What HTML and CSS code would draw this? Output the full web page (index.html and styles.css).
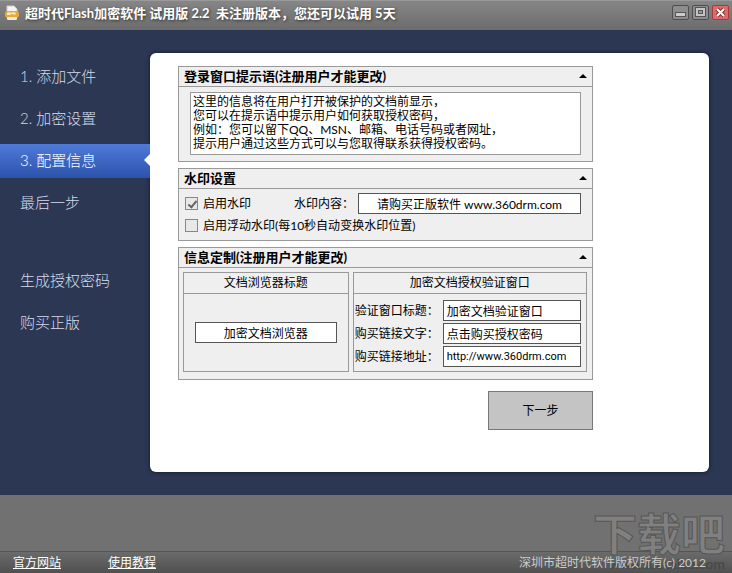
FILE: index.html
```html
<!DOCTYPE html>
<html lang="zh-CN">
<head>
  <meta charset="UTF-8">
  <title>超时代Flash加密软件</title>
  <link rel="stylesheet" href="styles.css">
</head>
<body>

  <header class="titlebar">
    <svg class="app-icon" width="16" height="16" viewBox="0 0 16 16" aria-hidden="true">
      <path d="M3 1h7l3 3v5H3z" fill="#f4f4f0" stroke="#cfcfcf" stroke-width="1"/>
      <rect x="1" y="6" width="14" height="7" rx="3" fill="#e9a83a"/>
      <path d="M3 8l2-1 2 1 2-1 3 1-1 2-3-1-2 1-3 0z" fill="#fbe7b8"/>
      <rect x="3" y="12" width="10" height="3" rx="1" fill="#eeeae0"/>
    </svg>
    <h1>超时代Flash加密软件 试用版 2.2 &nbsp;未注册版本，您还可以试用 5天</h1>
    <div class="window-buttons">
      <button type="button" aria-label="最小化">
        <svg width="17" height="15" viewBox="0 0 17 15"><path d="M3 7h11v5H3z" fill="#555"/><path d="M4 8h9v3H4z" fill="#ccc"/></svg>
      </button>
      <button type="button" aria-label="最大化">
        <svg width="17" height="15" viewBox="0 0 17 15"><path d="M3 2h11v10H3z" fill="#555"/><path d="M4 3h9v8H4z" fill="#c4c4c4"/><path d="M6 5h5v4H6z" fill="#555"/><path d="M7 6h3v2H7z" fill="#999"/></svg>
      </button>
      <button type="button" class="close" aria-label="关闭">
        <svg width="17" height="15" viewBox="0 0 17 15"><path d="M5 4l7 7M12 4l-7 7" stroke="#7c3434" stroke-width="4"/><path d="M5 4l7 7M12 4l-7 7" stroke="#fff" stroke-width="2"/></svg>
      </button>
    </div>
  </header>

  <main>
    <nav>
      <a href="#">1. 添加文件</a>
      <a href="#">2. 加密设置</a>
      <a href="#" class="active">3. 配置信息</a>
      <a href="#">最后一步</a>
      <a href="#" class="separate">生成授权密码</a>
      <a href="#">购买正版</a>
    </nav>

    <form class="panel">
      <section class="group">
        <h2><label for="tips">登录窗口提示语(注册用户才能更改)</label></h2>
        <div class="tips">
          <textarea id="tips" rows="4">这里的信息将在用户打开被保护的文档前显示，
您可以在提示语中提示用户如何获取授权密码，
例如：您可以留下QQ、MSN、邮箱、电话号码或者网址，
提示用户通过这些方式可以与您取得联系获得授权密码。</textarea>
        </div>
      </section>

      <section class="group">
        <h2>水印设置</h2>
        <div class="watermark">
          <div class="row">
            <label class="check"><input type="checkbox" checked>启用水印</label>
            <label class="content-label" for="content">水印内容：</label>
            <input type="text" class="center" id="content" value="请购买正版软件 www.360drm.com">
          </div>
          <div class="row">
            <label class="check"><input type="checkbox">启用浮动水印(每10秒自动变换水印位置)</label>
          </div>
        </div>
      </section>

      <section class="group">
        <h2>信息定制(注册用户才能更改)</h2>
        <div class="custom">
          <div class="box browser">
            <h3><label for="browser">文档浏览器标题</label></h3>
            <div class="browser-field">
              <input type="text" class="center" id="browser" value="加密文档浏览器">
            </div>
          </div>
          <div class="box auth">
            <h3>加密文档授权验证窗口</h3>
            <div class="fields">
              <label for="win">验证窗口标题：</label>
              <input type="text" id="win" value="加密文档验证窗口">
              <label for="link">购买链接文字：</label>
              <input type="text" id="link" value="点击购买授权密码">
              <label for="url">购买链接地址：</label>
              <input type="text" id="url" class="url" value="http://www.360drm.com">
            </div>
          </div>
        </div>
      </section>

      <button type="button" class="next">下一步</button>
    </form>
  </main>

  <footer>
    <div class="site-mark" aria-hidden="true">下载吧<small>www.xiazaiba.com</small></div>
    <div class="bottom">
      <a href="#">官方网站</a>
      <a href="#">使用教程</a>
      <span>深圳市超时代软件版权所有(c) 2012</span>
    </div>
  </footer>

</body>
</html>
```
FILE: styles.css
```css
* {
  box-sizing: border-box;
}
body {
  margin: 0;
  min-height: 100vh;
  display: flex;
  flex-direction: column;
  background: #717171;
  font-family: Lato, 'Noto Sans CJK SC', sans-serif;
  font-size: 12px;
  line-height: 14px;
  color: #000;
}
h1, h2, h3 {
  margin: 0;
  font-size: 13px;
}
button, input, textarea {
  font: inherit;
  color: inherit;
  margin: 0;
}

/* title bar */
.titlebar {
  display: flex;
  align-items: flex-start;
  height: 30px;
  padding: 4px 3px 0 4px;
  background: linear-gradient(#868686, #6c6c6c);
  border-top: 1px solid #999;
}
.titlebar h1 {
  margin-left: 5px;
  line-height: 16px;
  color: #fff;
  text-shadow: 1px 1px 3px #333;
  white-space: pre;
}
.window-buttons {
  display: flex;
  gap: 3px;
  margin-left: auto;
}
.window-buttons button {
  width: 17px;
  height: 15px;
  padding: 0;
  border: 1px solid #4e4e4e;
  border-radius: 2px;
  background: #8d8d8d;
  display: flex;
  align-items: center;
  justify-content: center;
}
.window-buttons svg {
  flex: none;
}
.window-buttons .close {
  background: #e06a6a;
  border-color: #a23c3c;
}

/* blue area */
main {
  display: flex;
  align-items: flex-start;
  padding: 23px 23px 23px 0;
  background: #2c3753;
}
nav {
  flex: none;
  width: 150px;
  padding-top: 7px;
  display: flex;
  flex-direction: column;
  gap: 8px;
}
nav a {
  position: relative;
  height: 34px;
  padding-left: 20px;
  font-size: 15px;
  line-height: 32px;
  font-weight: 300;
  color: #d4dbea;
  text-decoration: none;
}
nav .separate {
  margin-top: 36px;
}
nav .active {
  background: linear-gradient(#4f7ad8, #2c53ac);
  color: #fff;
}
nav .active::after {
  content: "";
  position: absolute;
  right: 0;
  top: 10px;
  border: 6px solid transparent;
  border-left: 0;
  border-right-color: #fff;
}
.panel {
  flex: 1;
  padding: 13px 116px 42px 28px;
  border-radius: 6px;
  background: #fff;
  box-shadow: 0 0 4px #10182c;
  display: flex;
  flex-direction: column;
}

/* groups */
.group {
  margin-bottom: 6px;
  border: 1px solid #999;
  background: #efefef;
}
.group h2 {
  display: flex;
  align-items: center;
  justify-content: space-between;
  height: 20px;
  padding: 0 5px 2px;
  border-bottom: 1px solid #999;
}
.group h2::after {
  content: "";
  border: 4px solid transparent;
  border-top: 0;
  border-bottom-color: #000;
}
.tips {
  padding: 5px 11px 6px;
}
textarea {
  display: block;
  width: 100%;
  height: 63px;
  padding: 2px;
  border: 1px solid #999;
  background: #fff;
  resize: none;
  overflow: hidden;
}
input[type="text"] {
  width: 100%;
  min-width: 0;
  height: 21px;
  padding: 0 3px;
  border: 1px solid #555;
  background: #fff;
}
.center {
  text-align: center;
}
.watermark {
  padding: 4px 11px 3px 6px;
}
.row {
  display: flex;
  align-items: center;
  height: 23px;
}
.row:first-child {
  height: 21px;
}
.check {
  display: flex;
  align-items: center;
  gap: 5px;
  white-space: nowrap;
}
.content-label {
  flex: none;
  width: 64px;
  margin-left: 43px;
  white-space: nowrap;
}
input[type="checkbox"] {
  appearance: none;
  position: relative;
  width: 13px;
  height: 13px;
  border: 1px solid #888;
  background: #e8e8e8;
}
input[type="checkbox"]:checked::after {
  content: "";
  position: absolute;
  left: 4px;
  top: 1px;
  width: 3px;
  height: 7px;
  border: solid #666;
  border-width: 0 2px 2px 0;
  transform: rotate(40deg);
}

.custom {
  display: flex;
  gap: 4px;
  padding: 4px 5px 7px 4px;
}
.box {
  border: 1px solid #999;
}
.box h3 {
  height: 21px;
  border-bottom: 1px solid #999;
  font-size: 12px;
  font-weight: normal;
  line-height: 20px;
  text-align: center;
}
.browser {
  flex: none;
  width: 41%;
}
.browser-field {
  padding: 28px 11px;
}
.auth {
  flex: 1;
}
.fields {
  display: grid;
  grid-template-columns: 88px 1fr;
  row-gap: 2px;
  align-items: center;
  padding: 6px 5px 4px 1px;
}
.fields .url {
  font-family: Roboto, sans-serif;
  font-size: 11px;
}
.next {
  align-self: flex-end;
  width: 105px;
  height: 39px;
  margin-top: 5px;
  border: 1px solid #777;
  background: #c4c4c4;
}

/* footer */
footer {
  position: relative;
  flex: 1;
  display: flex;
  flex-direction: column;
  justify-content: flex-end;
  padding-top: 56px;
}
.bottom {
  display: flex;
  gap: 47px;
  height: 22px;
  padding: 0 26px 0 13px;
  border-top: 1px solid #555;
  background: linear-gradient(#6b6b6b, #505050);
  line-height: 21px;
  color: #ccc;
}
.bottom a {
  color: #fff;
}
.bottom span {
  position: relative;
  z-index: 1;
  margin-left: auto;
}
.site-mark {
  position: absolute;
  right: 7px;
  bottom: 3px;
  font-size: 44px;
  line-height: 48px;
  font-weight: bold;
  color: #808080;
  -webkit-text-stroke: 1px #575757;
}
.site-mark small {
  display: block;
  font-size: 14px;
  line-height: 12px;
  text-align: right;
  color: #4a4a4a;
  -webkit-text-stroke: 0;
}
```
